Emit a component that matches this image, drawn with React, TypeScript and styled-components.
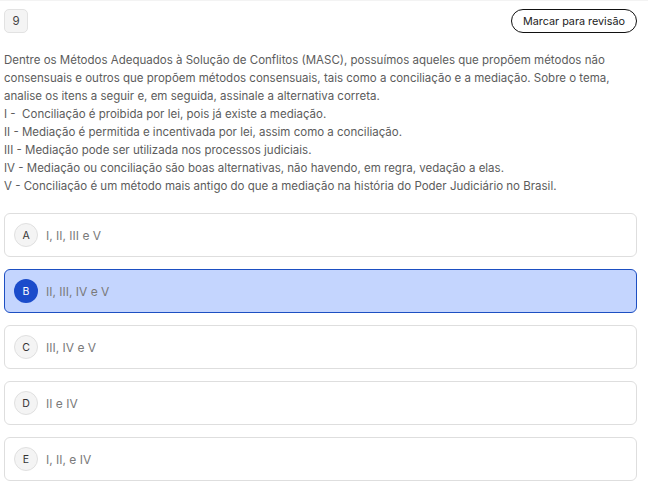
import * as React from 'react'
import styled, { createGlobalStyle } from 'styled-components'

const GlobalStyle = createGlobalStyle`
  html, body {
    margin: 0;
    padding: 0;
    background: #ffffff;
    font-family: Inter, "Noto Sans", "Liberation Sans", sans-serif;
  }
`

const Page = styled.div`
  border-top: 1px solid #f3f3f3;
  padding: 8px 11px 0 4px;
  width: 633px;
`

const Header = styled.div`
  display: flex;
  align-items: center;
  justify-content: space-between;
  height: 24px;
`

const Number = styled.div`
  width: 22px;
  height: 22px;
  border: 1px solid #e2e2e2;
  border-radius: 5px;
  background: #f4f4f4;
  color: #444;
  font-size: 11.5px;
  display: flex;
  align-items: center;
  justify-content: center;
`

const ReviewButton = styled.button`
  height: 24px;
  width: 126px;
  padding: 0;
  border: 1px solid #111;
  border-radius: 12px;
  background: #fff;
  color: #222;
  font-family: inherit;
  font-size: 10.8px;
  white-space: nowrap;
  cursor: pointer;
`

const Statement = styled.div`
  margin: 18px -7px 0 0;
  color: #5c5c5c;
  font-size: 11.5px;
  line-height: 18px;
`

const Line = styled.div`
  white-space: pre-wrap;
`

const Options = styled.div`
  margin-top: 18px;
  display: flex;
  flex-direction: column;
  gap: 12px;
`

const Option = styled.div<{ $selected?: boolean }>`
  height: 42px;
  display: flex;
  align-items: center;
  gap: 8px;
  padding: 0 9px;
  border: 1px solid ${p => (p.$selected ? '#1d4fc2' : '#dedede')};
  border-radius: 6px;
  background: ${p => (p.$selected ? '#c4d5fe' : '#ffffff')};
  cursor: pointer;
`

const Letter = styled.span<{ $selected?: boolean }>`
  width: ${p => (p.$selected ? '24px' : '22px')};
  height: ${p => (p.$selected ? '24px' : '22px')};
  border-radius: 50%;
  border: ${p => (p.$selected ? 'none' : '1px solid #e0e0e0')};
  background: ${p => (p.$selected ? '#1b4ccb' : '#f4f4f4')};
  color: ${p => (p.$selected ? '#ffffff' : '#333')};
  font-size: 10.5px;
  display: flex;
  align-items: center;
  justify-content: center;
  flex-shrink: 0;
`

const OptionText = styled.span`
  color: #7a7a7a;
  font-size: 12px;
`

const lines = [
  'Dentre os Métodos Adequados à Solução de Conflitos (MASC), possuímos aqueles que propõem métodos não consensuais e outros que propõem métodos consensuais, tais como a conciliação e a mediação. Sobre o tema, analise os itens a seguir e, em seguida, assinale a alternativa correta.',
  'I -  Conciliação é proibida por lei, pois já existe a mediação.',
  'II - Mediação é permitida e incentivada por lei, assim como a conciliação.',
  'III - Mediação pode ser utilizada nos processos judiciais.',
  'IV - Mediação ou conciliação são boas alternativas, não havendo, em regra, vedação a elas.',
  'V - Conciliação é um método mais antigo do que a mediação na história do Poder Judiciário no Brasil.',
]

const options = [
  { letter: 'A', text: 'I, II, III e V' },
  { letter: 'B', text: 'II, III, IV e V' },
  { letter: 'C', text: 'III, IV e V' },
  { letter: 'D', text: 'II e IV' },
  { letter: 'E', text: 'I, II, e IV' },
]

export default function App() {
  const [selected, setSelected] = React.useState('B')
  return (
    <>
      <GlobalStyle />
      <Page>
        <Header>
          <Number>9</Number>
          <ReviewButton>Marcar para revisão</ReviewButton>
        </Header>
        <Statement>
          {lines.map(l => (
            <Line key={l}>{l}</Line>
          ))}
        </Statement>
        <Options>
          {options.map(o => (
            <Option key={o.letter} $selected={selected === o.letter} onClick={() => setSelected(o.letter)}>
              <Letter $selected={selected === o.letter}>{o.letter}</Letter>
              <OptionText>{o.text}</OptionText>
            </Option>
          ))}
        </Options>
      </Page>
    </>
  )
}
